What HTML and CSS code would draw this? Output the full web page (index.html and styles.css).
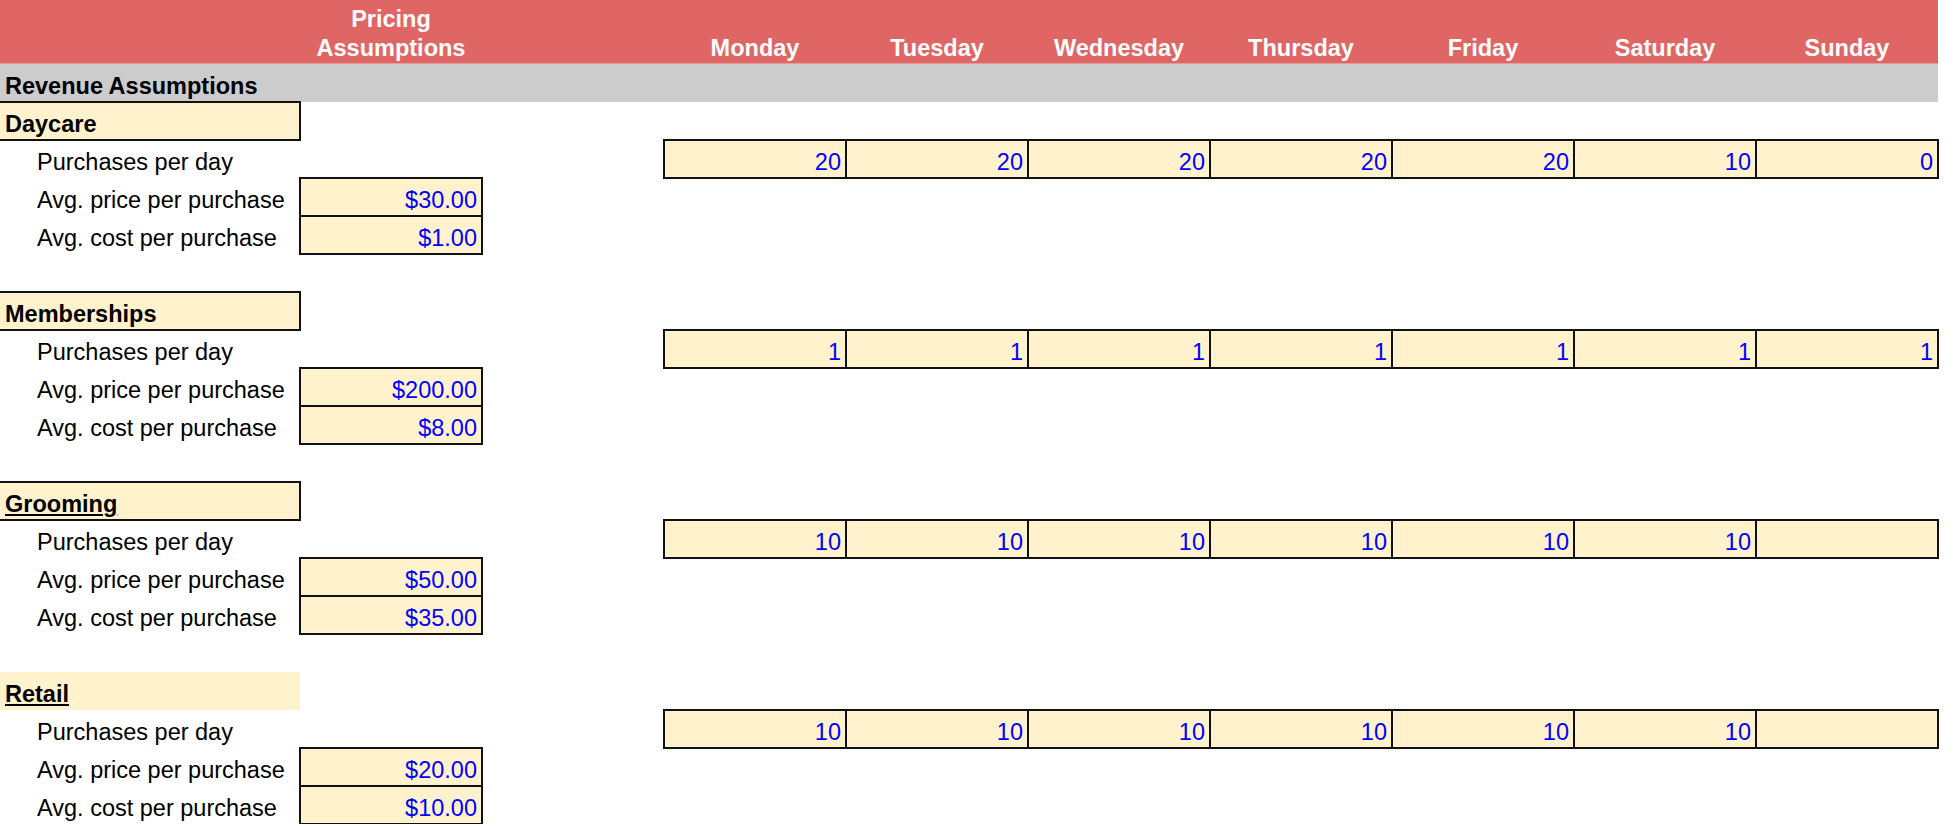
FILE: index.html
```html
<!DOCTYPE html>
<html lang="en">
<head>
<meta charset="utf-8">
<title>Pricing Assumptions</title>
<link rel="stylesheet" href="styles.css">
</head>
<body>
<div class="sheet">
  <div class="row head">
    <div class="cell"></div>
    <div class="cell hcell">Pricing<br>Assumptions</div>
    <div class="cell"></div>
    <div class="cell hcell">Monday</div>
    <div class="cell hcell">Tuesday</div>
    <div class="cell hcell">Wednesday</div>
    <div class="cell hcell">Thursday</div>
    <div class="cell hcell">Friday</div>
    <div class="cell hcell">Saturday</div>
    <div class="cell hcell">Sunday</div>
  </div>
  <div class="row sec">
    <div class="cell sec-title">Revenue Assumptions</div>
  </div>

  <!-- Daycare -->
  <div class="row"><div class="cell cat box">Daycare</div></div>
  <div class="row">
    <div class="cell lbl">Purchases per day</div>
    <div class="days">
      <div class="cell num box">20</div>
      <div class="cell num box">20</div>
      <div class="cell num box">20</div>
      <div class="cell num box">20</div>
      <div class="cell num box">20</div>
      <div class="cell num box">10</div>
      <div class="cell num box">0</div>
    </div>
  </div>
  <div class="row"><div class="cell lbl">Avg. price per purchase</div><div class="cell val box">$30.00</div></div>
  <div class="row"><div class="cell lbl">Avg. cost per purchase</div><div class="cell val box">$1.00</div></div>
  <div class="row"></div>

  <!-- Memberships -->
  <div class="row"><div class="cell cat box">Memberships</div></div>
  <div class="row">
    <div class="cell lbl">Purchases per day</div>
    <div class="days">
      <div class="cell num box">1</div>
      <div class="cell num box">1</div>
      <div class="cell num box">1</div>
      <div class="cell num box">1</div>
      <div class="cell num box">1</div>
      <div class="cell num box">1</div>
      <div class="cell num box">1</div>
    </div>
  </div>
  <div class="row"><div class="cell lbl">Avg. price per purchase</div><div class="cell val box">$200.00</div></div>
  <div class="row"><div class="cell lbl">Avg. cost per purchase</div><div class="cell val box">$8.00</div></div>
  <div class="row"></div>

  <!-- Grooming -->
  <div class="row"><div class="cell cat box"><u>Grooming</u></div></div>
  <div class="row">
    <div class="cell lbl">Purchases per day</div>
    <div class="days">
      <div class="cell num box">10</div>
      <div class="cell num box">10</div>
      <div class="cell num box">10</div>
      <div class="cell num box">10</div>
      <div class="cell num box">10</div>
      <div class="cell num box">10</div>
      <div class="cell num box"></div>
    </div>
  </div>
  <div class="row"><div class="cell lbl">Avg. price per purchase</div><div class="cell val box">$50.00</div></div>
  <div class="row"><div class="cell lbl">Avg. cost per purchase</div><div class="cell val box">$35.00</div></div>
  <div class="row"></div>

  <!-- Retail -->
  <div class="row"><div class="cell cat"><u>Retail</u></div></div>
  <div class="row">
    <div class="cell lbl">Purchases per day</div>
    <div class="days">
      <div class="cell num box">10</div>
      <div class="cell num box">10</div>
      <div class="cell num box">10</div>
      <div class="cell num box">10</div>
      <div class="cell num box">10</div>
      <div class="cell num box">10</div>
      <div class="cell num box"></div>
    </div>
  </div>
  <div class="row"><div class="cell lbl">Avg. price per purchase</div><div class="cell val box">$20.00</div></div>
  <div class="row"><div class="cell lbl">Avg. cost per purchase</div><div class="cell val box">$10.00</div></div>
</div>
</body>
</html>
```

FILE: styles.css
```css
* {
  box-sizing: border-box;
}

body {
  margin: 0;
  background: #ffffff;
  font-family: "Liberation Sans", Arial, sans-serif;
  font-size: 23.5px;
  color: #000000;
}

.sheet {
  width: 1938px;
}

.row {
  display: grid;
  grid-template-columns: 300px repeat(9, 182px);
  height: 38px;
}

.cell {
  display: flex;
  align-items: flex-end;
  min-width: 0;
  line-height: 26px;
  padding: 0 5px 3px 5px;
  white-space: nowrap;
}

/* header */
.head {
  height: 64px;
  background: #e06666;
  color: #ffffff;
  font-weight: bold;
  border-bottom: 1px solid #e79a9a;
}

.hcell {
  justify-content: center;
  text-align: center;
  line-height: 29px;
  padding-bottom: 0;
}

/* section band */
.sec {
  background: #cccccc;
}

.sec-title {
  grid-column: 1 / span 3;
  font-weight: bold;
}

/* category labels */
.cat {
  grid-column: 1;
  font-weight: bold;
  background: #fff2cc;
}

.cat u {
  text-decoration-thickness: 2px;
  text-underline-offset: 2px;
}

.lbl {
  grid-column: 1;
  padding-left: 37px;
}

/* bordered input cells */
.box {
  border: 2px solid #111111;
  margin: -1px;
  padding-bottom: 2px;
}

.cat.box {
  border-left: none;
  margin-left: 0;
}

.val {
  grid-column: 2;
  justify-content: flex-end;
  padding-right: 4px;
  color: #0000ff;
  background: #fff2cc;
}

.days {
  grid-column: 4 / span 7;
  display: grid;
  grid-template-columns: repeat(7, 182px);
}

.num {
  justify-content: flex-end;
  padding-right: 4px;
  color: #0000ff;
  background: #fff2cc;
}
```
